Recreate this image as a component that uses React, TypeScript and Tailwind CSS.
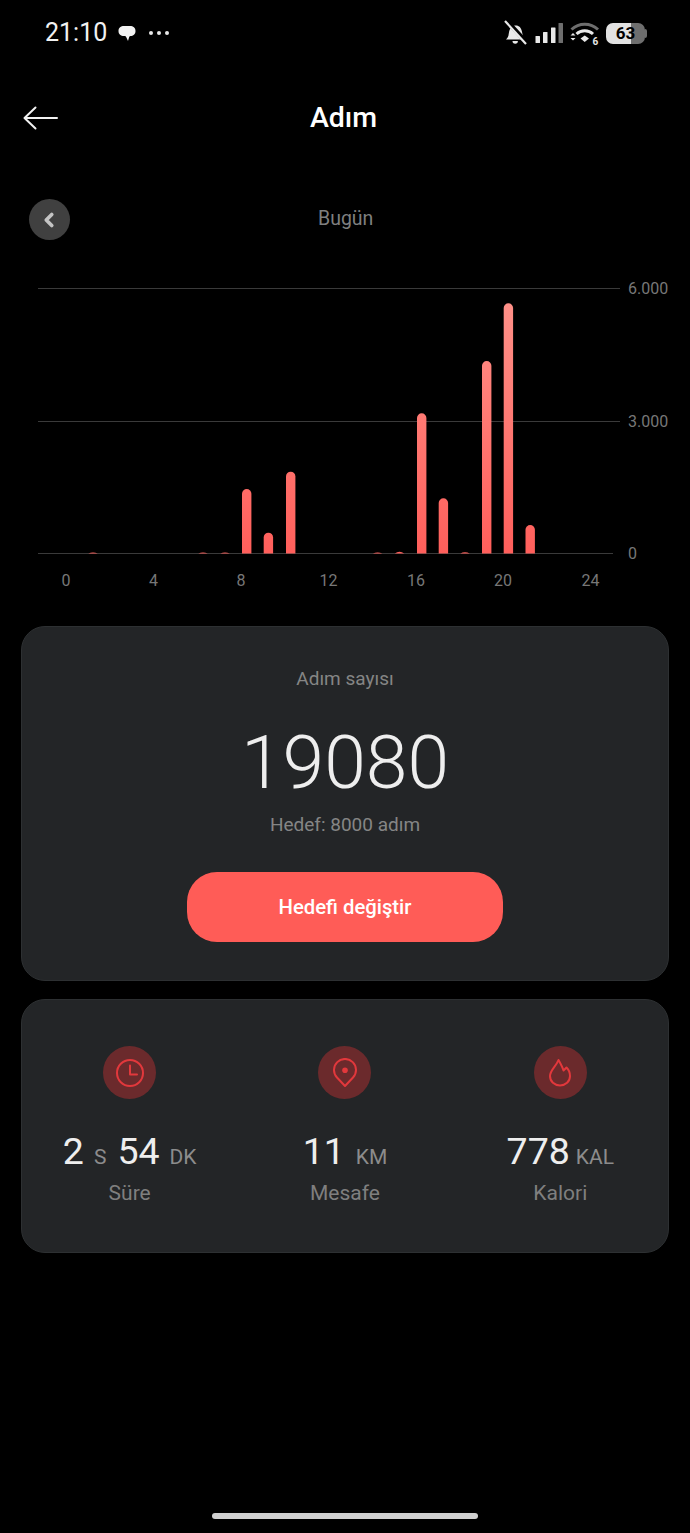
import { ChevronLeft } from "lucide-react";

const bars = [
  { x: 93, top: 552.4 },
  { x: 203, top: 552.4 },
  { x: 225, top: 552.4 },
  { x: 246.7, top: 489 },
  { x: 268.4, top: 532.7 },
  { x: 290.7, top: 471.7 },
  { x: 377.6, top: 552.4 },
  { x: 399.5, top: 551 },
  { x: 421.7, top: 413.3 },
  { x: 443.4, top: 498.3 },
  { x: 465, top: 552.2 },
  { x: 486.7, top: 361 },
  { x: 508.4, top: 303.3 },
  { x: 530.2, top: 525 },
];

const hours = [
  { x: 66, label: "0" },
  { x: 153.5, label: "4" },
  { x: 241, label: "8" },
  { x: 328.5, label: "12" },
  { x: 416, label: "16" },
  { x: 503, label: "20" },
  { x: 590.5, label: "24" },
];

function BackArrow() {
  return (
    <svg width="36" height="26" viewBox="0 0 36 26" fill="none" stroke="#f2f2f2" strokeWidth="2" strokeLinecap="round" strokeLinejoin="round">
      <path d="M34 13H2M12.500 2.500 1.500 13l11 10.500" />
    </svg>
  );
}

function BellOff() {
  return (
    <svg width="24" height="26" viewBox="0 0 24 26" fill="none">
      <path d="M2 19.500c1.800-1.500 2.400-2.800 2.700-5.400.5-4.600 2.300-7.700 6-8.600 4-.6 6.400 2 7.100 5.500l1.200 5.400 2 3.100H2Z" fill="#e8e8e8" />
      <path d="M8.500 21h5.400a2.700 2.700 0 0 1-5.400 0Z" fill="#e8e8e8" />
      <path d="M2.500 0.500 23.500 23.500" stroke="#000" strokeWidth="4.500" />
      <path d="M1 1 22 24" stroke="#e8e8e8" strokeWidth="2.200" />
    </svg>
  );
}

function SignalBars() {
  return (
    <svg width="29" height="22" viewBox="0 0 29 22">
      <rect x="0.500" y="14" width="4.500" height="7" rx="0.500" fill="#e8e8e8" />
      <rect x="8" y="10" width="4.500" height="11" rx="0.500" fill="#e8e8e8" />
      <rect x="16" y="5.500" width="4.500" height="15.500" rx="0.500" fill="#e8e8e8" />
      <rect x="23.500" y="1" width="4.500" height="20" rx="0.500" fill="#6e6e6e" />
    </svg>
  );
}

function WifiIcon() {
  return (
    <svg width="32" height="24" viewBox="0 0 32 24" fill="none">
      <path d="M2.500 8.500C10 1.500 21.500 1.500 29 8.500" stroke="#6e6e6e" strokeWidth="3" />
      <path d="M7.500 13C12 8.800 19.500 8.800 24 13" stroke="#e8e8e8" strokeWidth="3" />
      <path d="M11.500 17.500 15.700 14.500 20 17.500 15.700 21Z" fill="#e8e8e8" />
      <path d="M1.500 14.500 4 12l2.500 2.500ZM1.500 17H6.500L4 19.500Z" fill="#e8e8e8" />
      <text x="23.500" y="23.500" fill="#e8e8e8" fontSize="10" fontWeight="700" fontFamily="Roboto, sans-serif">6</text>
    </svg>
  );
}

function Battery() {
  return (
    <div className="flex items-center">
      <div className="flex h-[21px] w-[39px] items-center justify-center rounded-[7px] bg-[linear-gradient(90deg,#e2e2e2_63%,#6e6e6e_63%)]">
        <span className="text-[17px] leading-none font-bold text-black">63</span>
      </div>
      <div className="h-[9px] w-[2px] rounded-r-sm bg-[#6e6e6e]" />
    </div>
  );
}

function ChatBubble() {
  return (
    <svg width="20" height="20" viewBox="0 0 20 20">
      <path d="M1.500 8c0-3.500 2.300-5 5.500-5h6c3.200 0 5.500 1.500 5.500 5s-2.300 5-5 5c-.6 0-1 .3-1.300 1l-1.200 4-1.600-3.500c-.3-.8-.8-1.500-1.900-1.500H7C3.800 13 1.500 11.500 1.500 8Z" fill="#f2f2f2" />
    </svg>
  );
}

function ClockIcon() {
  return (
    <svg width="30" height="30" viewBox="0 0 30 30" fill="none" stroke="#e2383c" strokeWidth="2" strokeLinecap="round" strokeLinejoin="round">
      <circle cx="15" cy="15" r="13" />
      <path d="M15 7.500v9h7" />
    </svg>
  );
}

function PinIcon() {
  return (
    <svg width="30" height="30" viewBox="0 0 30 30" fill="none" stroke="#e2383c" strokeWidth="2" strokeLinejoin="round">
      <path d="M15 28 7 19.500A11 11 0 1 1 23 19.500L15 28Z" />
      <circle cx="15" cy="12.300" r="2.800" fill="#e2383c" stroke="none" />
    </svg>
  );
}

function FlameIcon() {
  return (
    <svg width="30" height="30" viewBox="0 0 30 30" fill="none" stroke="#e2383c" strokeWidth="2" strokeLinejoin="round">
      <path d="M13.500 2C15.500 5.500 17.500 9 18.500 12.500L21.500 9.500C24 12 25 15 25 18 25 23.500 20.500 27.500 15 27.500 9.500 27.500 5 23.500 5 18 5 12 11 8.500 13.500 2Z" />
    </svg>
  );
}

function Chart() {
  return (
    <svg width="690" height="320" viewBox="0 280 690 320" className="block">
      <defs>
        <linearGradient id="barFill" gradientUnits="userSpaceOnUse" x1="0" y1="303" x2="0" y2="553">
          <stop offset="0" stopColor="#ff9088" />
          <stop offset="1" stopColor="#ff5f5b" />
        </linearGradient>
      </defs>
      <line x1="38" y1="288.500" x2="620" y2="288.500" stroke="#3a3a3a" />
      <line x1="38" y1="421.500" x2="620" y2="421.500" stroke="#3a3a3a" />
      <line x1="38" y1="553.500" x2="613" y2="553.500" stroke="#3a3a3a" />
      {bars.map((bar) => (
        <path
          key={bar.x}
          d={
            553.5 - bar.top > 5
              ? `M${bar.x - 4.7} 553.500V${bar.top + 4.7}a4.700 4.700 0 0 1 9.400 0V553.500Z`
              : `M${bar.x - 4.7} 553.500Q${bar.x} ${bar.top - 1} ${bar.x + 4.7} 553.500Z`
          }
          fill="url(#barFill)"
        />
      ))}
      <g fill="#777777" fontSize="16" fontFamily="Roboto, sans-serif">
        <text x="628" y="294">6.000</text>
        <text x="628" y="427">3.000</text>
        <text x="628" y="559">0</text>
        {hours.map((hour) => (
          <text key={hour.label} x={hour.x} y="586" textAnchor="middle">
            {hour.label}
          </text>
        ))}
      </g>
    </svg>
  );
}

function Stat({ icon, label, children }: { icon: React.ReactNode; label: string; children: React.ReactNode }) {
  return (
    <div className="flex w-[216px] flex-col items-center">
      <div className="flex h-[53px] w-[53px] items-center justify-center rounded-full bg-[#6b2a2c]">{icon}</div>
      <div className="mt-[30px] flex h-[44px] items-baseline justify-center whitespace-nowrap text-[37.500px] leading-[44px] text-[#eeeeee]">
        {children}
      </div>
      <div className="mt-[7px] text-[21px] leading-[26px] text-[#7f7f7f]">{label}</div>
    </div>
  );
}

function Unit({ children }: { children: React.ReactNode }) {
  return <span className="text-[21px] text-[#8c8c8c]">{children}</span>;
}

export default function App() {
  return (
    <div className="flex h-[1533px] w-[690px] flex-col overflow-hidden bg-black font-['Roboto',sans-serif]">
      <div className="flex h-[64px] items-center justify-between pt-[2px] pr-[43px] pl-[45px]">
        <div className="flex items-center">
          <span className="text-[25px] text-[#f2f2f2]">21:10</span>
          <span className="ml-[10px]"><ChatBubble /></span>
          <span className="ml-[12px] flex gap-[4px]">
            <span className="h-[4px] w-[4px] rounded-full bg-[#e8e8e8]" />
            <span className="h-[4px] w-[4px] rounded-full bg-[#e8e8e8]" />
            <span className="h-[4px] w-[4px] rounded-full bg-[#e8e8e8]" />
          </span>
        </div>
        <div className="flex items-center gap-[5px]">
          <BellOff />
          <span className="ml-[2px]"><SignalBars /></span>
          <WifiIcon />
          <Battery />
        </div>
      </div>

      <div className="mt-[30px] flex h-[48px] items-center justify-between pr-[20px] pl-[23px]">
        <BackArrow />
        <span className="mr-[42px] text-[28.500px] font-medium text-white">Adım</span>
        <span />
      </div>

      <div className="mt-[57px] flex h-[41px] items-center pl-[29px]">
        <div className="flex h-[41px] w-[41px] items-center justify-center rounded-full bg-[#404040] pr-[2px]">
          <ChevronLeft size={22} color="#c4c4c4" strokeWidth={4} />
        </div>
        <span className="ml-[248px] -translate-y-px text-[19.500px] text-[#7f7f7f]">Bugün</span>
      </div>

      <div className="mt-[40px]">
        <Chart />
      </div>

      <div className="mx-[21px] mt-[26px] flex h-[355px] flex-col items-center rounded-[24px] border border-[#2d3032] bg-[#232527]">
        <div className="mt-[39px] text-[19px] leading-[26px] text-[#858585]">Adım sayısı</div>
        <div className="mt-[23px] text-[75px] leading-[94px] font-light text-[#eeeeee]">19080</div>
        <div className="mt-[3px] text-[19px] leading-[26px] text-[#858585]">Hedef: 8000 adım</div>
        <button className="mt-[34px] h-[70px] w-[316px] rounded-[30px] bg-[#ff5c57] text-[20.300px] font-medium text-white">
          Hedefi değiştir
        </button>
      </div>

      <div className="mx-[21px] mt-[18px] flex h-[254px] items-start justify-center rounded-[24px] border border-[#2d3032] bg-[#232527] pt-[46px]">
        <Stat icon={<ClockIcon />} label="Süre">
          <span>2</span>
          <span className="ml-[10px]"><Unit>S</Unit></span>
          <span className="ml-[11px]">54</span>
          <span className="ml-[10px]"><Unit>DK</Unit></span>
        </Stat>
        <Stat icon={<PinIcon />} label="Mesafe">
          <span>11</span>
          <span className="ml-[11px]"><Unit>KM</Unit></span>
        </Stat>
        <Stat icon={<FlameIcon />} label="Kalori">
          <span>778</span>
          <span className="ml-[6px]"><Unit>KAL</Unit></span>
        </Stat>
      </div>

      <div className="mt-auto mb-[14px] h-[6px] w-[266px] self-center rounded-full bg-[#d0d0d0]" />
    </div>
  );
}
